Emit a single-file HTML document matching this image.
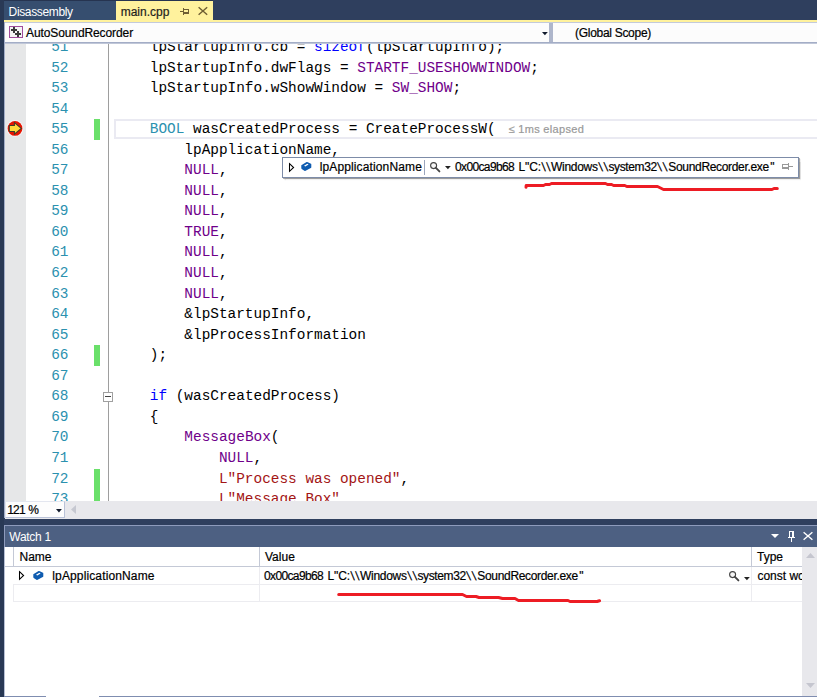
<!DOCTYPE html>
<html><head><meta charset="utf-8"><title>main.cpp</title>
<style>
html,body{margin:0;padding:0;}
body{width:817px;height:697px;overflow:hidden;background:#293955;position:relative;font-family:"Liberation Sans",sans-serif;font-size:12px;color:#1e1e1e;}
.abs{position:absolute;}
svg{position:absolute;overflow:visible;}
.ui{position:absolute;white-space:nowrap;font-family:"Liberation Sans",sans-serif;font-size:12px;line-height:14px;color:#000;-webkit-text-stroke:0.2px currentColor;}
#editor{position:absolute;left:5px;top:44px;width:812px;height:457px;background:#fff;overflow:hidden;}
.ln{position:absolute;left:0;white-space:pre;font-family:"Liberation Mono",monospace;font-size:14.414px;line-height:20px;height:20px;color:#000;}
.num{position:absolute;white-space:pre;font-family:"Liberation Mono",monospace;font-size:14.414px;line-height:20px;height:20px;color:#2b91af;text-align:right;width:40px;}
.k{color:#0000ff}.m{color:#6f008a}.t{color:#2b91af}.s{color:#a31515}
.g{position:absolute;width:6px;background:#6ae06a;}
.tri{position:absolute;width:0;height:0;}
</style></head><body>

<div class="abs" style="left:0;top:0;width:817px;height:20px;background:#2f3f5e"></div>
<div class="abs" style="left:0;top:0;width:213px;height:1px;background:#263450"></div>
<div class="abs" style="left:0;top:0;width:4px;height:697px;background:#293955"></div>
<div class="abs" style="left:4px;top:1px;width:112px;height:19px;background:#364e6f"></div>
<div class="ui" style="left:8.6px;top:5px;color:#fff;letter-spacing:-0.36px;-webkit-text-stroke:0">Disassembly</div>
<div class="abs" style="left:116px;top:1px;width:97px;height:19px;background:#fff29d"></div>
<div class="ui" style="left:120.7px;top:5px;color:#1e1e1e">main.cpp</div>
<svg style="left:180px;top:8px" width="9" height="7" viewBox="0 0 9 7" shape-rendering="crispEdges"><g fill="#6f5f33"><rect x="0" y="3" width="3" height="1"/><rect x="3" y="0" width="1" height="7"/><rect x="4" y="1" width="5" height="1"/><rect x="8" y="1" width="1" height="5"/><rect x="4" y="4" width="5" height="2"/></g></svg>
<svg style="left:198px;top:7px" width="10" height="8" viewBox="0 0 10 8"><path d="M0.6 0.2L9.2 7.8M9.2 0.2L0.6 7.8" fill="none" stroke="#6f5f33" stroke-width="1.4"/></svg>
<div class="abs" style="left:4px;top:20px;width:813px;height:2px;background:#fff29d"></div>
<div class="abs" style="left:4px;top:22px;width:813px;height:22px;background:#fcfcfc"></div>
<div class="abs" style="left:549px;top:22px;width:4px;height:20px;background:#aeb6cb"></div>
<div class="abs" style="left:4px;top:22px;width:813px;height:1px;background:#c3cadb"></div>
<div class="abs" style="left:4px;top:42px;width:813px;height:1px;background:#a3adc6"></div>
<div class="abs" style="left:4px;top:43px;width:813px;height:1px;background:#c0c7d8"></div>
<div class="abs" style="left:4px;top:22px;width:1px;height:496.5px;background:#a3aec8"></div>
<svg style="left:9px;top:26px" width="14" height="12" viewBox="0 0 14 12" shape-rendering="crispEdges"><rect x="0.5" y="0.5" width="13" height="11" fill="#f4f4f4" stroke="#a04c9c"/><g fill="#3a3a3a"><rect x="2" y="3" width="6" height="2"/><rect x="4" y="1" width="2" height="6"/><rect x="6" y="7" width="6" height="2"/><rect x="8" y="5" width="2" height="6"/></g></svg>
<div class="ui" id="asr" style="left:26px;top:26px;letter-spacing:-0.1px">AutoSoundRecorder</div>
<svg style="left:541.7px;top:32px" width="5.8" height="3.3" viewBox="0 0 5.8 3.3"><path d="M0 0H5.8L2.9 3.3Z" fill="#111a2c"/></svg>
<div class="ui" id="gs" style="left:575px;top:26px;letter-spacing:-0.29px">(Global Scope)</div>
<div id="editor">
<div class="abs" style="left:0;top:0;width:20.5px;height:457px;background:#e6e7e8"></div>
<div class="abs" style="left:103px;top:0;width:1px;height:457px;background:#9e9e9e"></div>
<div class="g" style="left:88.6px;top:75.15px;height:20.55px"></div>
<div class="g" style="left:88.6px;top:301.20px;height:20.55px"></div>
<div class="g" style="left:88.6px;top:424.50px;height:20.55px"></div>
<div class="g" style="left:88.6px;top:445.05px;height:20.55px"></div>
<div class="abs" style="left:109px;top:74.70px;width:720px;height:16.3px;border:2px solid #eaeaf2"></div>
<div class="num" style="left:23.50px;top:-7.05px">51</div>
<div class="ln" style="left:110.20px;top:-7.05px">    lpStartupInfo.cb = <span class="k">sizeof</span>(lpStartupInfo);</div>
<div class="num" style="left:23.50px;top:13.50px">52</div>
<div class="ln" style="left:110.20px;top:13.50px">    lpStartupInfo.dwFlags = <span class="m">STARTF_USESHOWWINDOW</span>;</div>
<div class="num" style="left:23.50px;top:34.05px">53</div>
<div class="ln" style="left:110.20px;top:34.05px">    lpStartupInfo.wShowWindow = <span class="m">SW_SHOW</span>;</div>
<div class="num" style="left:23.50px;top:54.60px">54</div>
<div class="num" style="left:23.50px;top:75.15px">55</div>
<div class="ln" style="left:110.20px;top:75.15px">    <span class="t">BOOL</span> wasCreatedProcess = CreateProcessW(</div>
<div class="num" style="left:23.50px;top:95.70px">56</div>
<div class="ln" style="left:110.20px;top:95.70px">        lpApplicationName,</div>
<div class="num" style="left:23.50px;top:116.25px">57</div>
<div class="ln" style="left:110.20px;top:116.25px">        <span class="m">NULL</span>,</div>
<div class="num" style="left:23.50px;top:136.80px">58</div>
<div class="ln" style="left:110.20px;top:136.80px">        <span class="m">NULL</span>,</div>
<div class="num" style="left:23.50px;top:157.35px">59</div>
<div class="ln" style="left:110.20px;top:157.35px">        <span class="m">NULL</span>,</div>
<div class="num" style="left:23.50px;top:177.90px">60</div>
<div class="ln" style="left:110.20px;top:177.90px">        <span class="m">TRUE</span>,</div>
<div class="num" style="left:23.50px;top:198.45px">61</div>
<div class="ln" style="left:110.20px;top:198.45px">        <span class="m">NULL</span>,</div>
<div class="num" style="left:23.50px;top:219.00px">62</div>
<div class="ln" style="left:110.20px;top:219.00px">        <span class="m">NULL</span>,</div>
<div class="num" style="left:23.50px;top:239.55px">63</div>
<div class="ln" style="left:110.20px;top:239.55px">        <span class="m">NULL</span>,</div>
<div class="num" style="left:23.50px;top:260.10px">64</div>
<div class="ln" style="left:110.20px;top:260.10px">        &amp;lpStartupInfo,</div>
<div class="num" style="left:23.50px;top:280.65px">65</div>
<div class="ln" style="left:110.20px;top:280.65px">        &amp;lpProcessInformation</div>
<div class="num" style="left:23.50px;top:301.20px">66</div>
<div class="ln" style="left:110.20px;top:301.20px">    );</div>
<div class="num" style="left:23.50px;top:321.75px">67</div>
<div class="num" style="left:23.50px;top:342.30px">68</div>
<div class="ln" style="left:110.20px;top:342.30px">    <span class="k">if</span> (wasCreatedProcess)</div>
<div class="num" style="left:23.50px;top:362.85px">69</div>
<div class="ln" style="left:110.20px;top:362.85px">    {</div>
<div class="num" style="left:23.50px;top:383.40px">70</div>
<div class="ln" style="left:110.20px;top:383.40px">        <span class="m">MessageBox</span>(</div>
<div class="num" style="left:23.50px;top:403.95px">71</div>
<div class="ln" style="left:110.20px;top:403.95px">            <span class="m">NULL</span>,</div>
<div class="num" style="left:23.50px;top:424.50px">72</div>
<div class="ln" style="left:110.20px;top:424.50px">            <span class="s">L"Process was opened"</span>,</div>
<div class="num" style="left:23.50px;top:445.05px">73</div>
<div class="ln" style="left:110.20px;top:445.05px">            <span class="s">L"Message Box"</span>,</div>
<div class="ui" style="left:503.5px;top:78px;color:#999;font-size:11px;letter-spacing:0.32px">≤ 1ms elapsed</div>
<svg style="left:2.4000000000000004px;top:76.1px" width="16" height="16" viewBox="0 0 16 16"><circle cx="8" cy="8.4" r="8.3" fill="#f6f6f6"/><circle cx="8" cy="8.4" r="7.4" fill="#e81400"/><path d="M2.3 5.4H7.4V2.7L14.3 8.4L7.4 14.1V11.5H2.3Z" fill="#ffd93a" stroke="#3f3c2c" stroke-width="1.05" stroke-linejoin="miter"/></svg>
<div class="abs" style="left:98px;top:348px;width:8px;height:8px;border:1px solid #a0a0a0;background:#fff"></div>
<div class="abs" style="left:100px;top:352px;width:6px;height:1px;background:#444"></div>
</div>
<div class="abs" style="left:282px;top:157px;width:515px;height:19px;background:#fff;border:1px solid #7d8ca8;box-shadow:1px 1px 0 rgba(0,0,0,0.3),1.5px 2px 1px rgba(0,0,0,0.12)"></div>
<svg style="left:289px;top:163px" width="6" height="10" viewBox="0 0 6 10"><path d="M0.5 0.6L4.6 4.5L0.5 8.4Z" fill="#fff" stroke="#000" stroke-width="1.05" stroke-linejoin="miter"/></svg>
<svg style="left:300.5px;top:162px" width="11" height="9" viewBox="0 0 11 9"><path d="M0.3 3.2L5.6 0.1Q6.2 -0.1 6.8 0.2L10 1.8Q10.3 2 10.3 2.5V5.3Q10.3 5.8 9.8 6L4.6 8.8Q4 9 3.4 8.7L0.7 6.9Q0.3 6.6 0.3 6.1Z" fill="#0f5cb0"/><path d="M3 3.7L6.3 1.7L7.6 2.4L4.3 4.4Z" fill="#fff"/></svg>
<div class="ui" id="t1" style="left:319.7px;top:160px;letter-spacing:0.13px">lpApplicationName</div>
<div class="abs" style="left:424px;top:160px;width:1px;height:15px;background:#9aa5bd"></div>
<svg style="left:430px;top:162px" width="11" height="11" viewBox="0 0 11 11"><circle cx="3.6" cy="3.6" r="3" fill="#f6f6f6" stroke="#444" stroke-width="1.1"/><path d="M5.9 5.9L9.4 9.4" stroke="#444" stroke-width="1.9" stroke-linecap="round"/></svg>
<svg style="left:444.7px;top:166px" width="5.8" height="3.3" viewBox="0 0 5.8 3.3"><path d="M0 0H5.8L2.9 3.3Z" fill="#222"/></svg>
<span class="ui" style="left:455.00px;top:160px;letter-spacing:-0.632px;">0x00ca9b68</span><span class="ui" style="left:518.50px;top:160px;letter-spacing:-0.079px;">L"C:</span><span class="ui" style="left:542.31px;top:160px;letter-spacing:1.414px;transform:skewX(7.67deg);transform-origin:0 50%;">\\</span><span class="ui" style="left:551.10px;top:160px;letter-spacing:-0.298px;">Windows</span><span class="ui" style="left:598.86px;top:160px;letter-spacing:1.914px;transform:skewX(10.33deg);transform-origin:0 50%;">\\</span><span class="ui" style="left:608.40px;top:160px;letter-spacing:-0.366px;">system32</span><span class="ui" style="left:658.08px;top:160px;letter-spacing:2.164px;transform:skewX(11.65deg);transform-origin:0 50%;">\\</span><span class="ui" style="left:668.30px;top:160px;letter-spacing:-0.324px;">SoundRecorder.exe</span><span class="ui" style="left:770.30px;top:160px;letter-spacing:0.000px;">"</span>
<svg style="left:782px;top:163px" width="11" height="7" viewBox="0 0 11 7" shape-rendering="crispEdges"><g fill="#999"><rect x="0" y="1" width="6" height="1"/><rect x="0" y="1" width="1" height="5"/><rect x="0" y="4" width="6" height="2"/><rect x="6" y="0" width="1" height="7"/><rect x="7" y="3" width="4" height="1"/></g></svg>
<div class="abs" style="left:4px;top:518px;width:813px;height:7px;background:#2f3f5e"></div>
<div class="abs" style="left:5px;top:501px;width:812px;height:17.5px;background:#e8e8ec"></div>
<div class="abs" style="left:5px;top:501px;width:60px;height:17px;background:#fdfdfd;border:1px solid #e3e6ef;border-right-color:#b9c2d8;border-bottom-color:#b9c2d8;box-sizing:border-box"></div>
<span class="ui" style="left:7.30px;top:503px;letter-spacing:-0.866px;">121</span><span class="ui" style="left:28.20px;top:503px;letter-spacing:0.000px;">%</span>
<svg style="left:56px;top:509px" width="5.9" height="3.4" viewBox="0 0 5.9 3.4"><path d="M0 0H5.9L2.95 3.4Z" fill="#111a2c"/></svg>
<svg style="left:71px;top:505px" width="5" height="9" viewBox="0 0 5 9"><path d="M5 0V9L0 4.5Z" fill="#c6c8d1"/></svg>
<div class="abs" style="left:4px;top:525px;width:813px;height:1px;background:#8e9bbc"></div>
<div class="abs" style="left:4px;top:525px;width:1px;height:22px;background:#8e9bbc"></div>
<div class="abs" style="left:4px;top:547px;width:1px;height:150px;background:#b7c0d5"></div>
<div class="abs" style="left:5px;top:526px;width:812px;height:21px;background:#4d6082"></div>
<div class="ui" style="left:9.3px;top:530px;color:#fff;letter-spacing:-0.29px;-webkit-text-stroke:0">Watch 1</div>
<svg style="left:771px;top:534px" width="8" height="4" viewBox="0 0 8 4"><path d="M0 0H8L4.0 4Z" fill="#fff"/></svg>
<svg style="left:788px;top:531.4px" width="7" height="11" viewBox="0 0 7 11"><g fill="#fff"><rect x="1" y="0" width="5" height="1"/><rect x="1" y="0" width="1" height="6"/><rect x="4" y="0" width="2" height="6"/><rect x="0" y="6" width="7" height="1"/><rect x="3" y="7" width="1" height="4"/></g></svg>
<svg style="left:803px;top:532px" width="10" height="8" viewBox="0 0 10 8"><path d="M0.6 0.2L9.4 7.8M9.4 0.2L0.6 7.8" fill="none" stroke="#fff" stroke-width="1.4"/></svg>
<div class="abs" style="left:5px;top:547px;width:812px;height:150px;background:#fff"></div>
<div class="abs" style="left:5px;top:566px;width:797px;height:1px;background:#c4c9d6"></div>
<div class="abs" style="left:13px;top:547px;width:1px;height:19px;background:#c4c9d6"></div>
<div class="abs" style="left:259px;top:547px;width:1px;height:19px;background:#c4c9d6"></div>
<div class="abs" style="left:751px;top:547px;width:1px;height:19px;background:#c4c9d6"></div>
<div class="abs" style="left:259px;top:567px;width:1px;height:35px;background:#ececf0"></div>
<div class="abs" style="left:751px;top:567px;width:1px;height:35px;background:#ececf0"></div>
<div class="abs" style="left:13px;top:585px;width:1px;height:17px;background:#ececf0"></div>
<div class="abs" style="left:13px;top:584px;width:789px;height:1px;background:#ececf0"></div>
<div class="abs" style="left:13px;top:601px;width:789px;height:1px;background:#ececf0"></div>
<div class="ui" style="left:19.5px;top:550px;">Name</div>
<div class="ui" style="left:265px;top:550px;">Value</div>
<div class="ui" style="left:757px;top:550px;">Type</div>
<svg style="left:19px;top:571px" width="6" height="10" viewBox="0 0 6 10"><path d="M0.5 0.6L4.6 4.5L0.5 8.4Z" fill="#fff" stroke="#000" stroke-width="1.05" stroke-linejoin="miter"/></svg>
<svg style="left:33px;top:571px" width="11" height="9" viewBox="0 0 11 9"><path d="M0.3 3.2L5.6 0.1Q6.2 -0.1 6.8 0.2L10 1.8Q10.3 2 10.3 2.5V5.3Q10.3 5.8 9.8 6L4.6 8.8Q4 9 3.4 8.7L0.7 6.9Q0.3 6.6 0.3 6.1Z" fill="#0f5cb0"/><path d="M3 3.7L6.3 1.7L7.6 2.4L4.3 4.4Z" fill="#fff"/></svg>
<div class="ui" id="w1" style="left:52.3px;top:569px;letter-spacing:0.13px">lpApplicationName</div>
<span class="ui" style="left:264.00px;top:569px;letter-spacing:-0.632px;">0x00ca9b68</span><span class="ui" style="left:327.50px;top:569px;letter-spacing:-0.079px;">L"C:</span><span class="ui" style="left:351.31px;top:569px;letter-spacing:1.414px;transform:skewX(7.67deg);transform-origin:0 50%;">\\</span><span class="ui" style="left:360.10px;top:569px;letter-spacing:-0.298px;">Windows</span><span class="ui" style="left:407.86px;top:569px;letter-spacing:1.914px;transform:skewX(10.33deg);transform-origin:0 50%;">\\</span><span class="ui" style="left:417.40px;top:569px;letter-spacing:-0.366px;">system32</span><span class="ui" style="left:467.08px;top:569px;letter-spacing:2.164px;transform:skewX(11.65deg);transform-origin:0 50%;">\\</span><span class="ui" style="left:477.30px;top:569px;letter-spacing:-0.324px;">SoundRecorder.exe</span><span class="ui" style="left:579.30px;top:569px;letter-spacing:0.000px;">"</span>
<svg style="left:729px;top:571.2px" width="11" height="11" viewBox="0 0 11 11"><circle cx="3.6" cy="3.6" r="3" fill="#f6f6f6" stroke="#444" stroke-width="1.1"/><path d="M5.9 5.9L9.4 9.4" stroke="#444" stroke-width="1.9" stroke-linecap="round"/></svg>
<svg style="left:743.6px;top:576.8px" width="5.8" height="3.3" viewBox="0 0 5.8 3.3"><path d="M0 0H5.8L2.9 3.3Z" fill="#222"/></svg>
<div class="ui" id="w3" style="left:757.4px;top:569px;width:44.6px;overflow:hidden">const wchar_t *</div>
<div class="abs" style="left:802px;top:547px;width:15px;height:149px;background:#e8e8ec"></div>
<svg style="left:806px;top:553px" width="9" height="5" viewBox="0 0 9 5"><path d="M0 5H9L4.5 0Z" fill="#c5c6cf"/></svg>
<svg style="left:806px;top:683px" width="9" height="5" viewBox="0 0 9 5"><path d="M0 0H9L4.5 5Z" fill="#c5c6cf"/></svg>
<div class="abs" style="left:4px;top:696px;width:42px;height:1px;background:#7f8db0"></div>
<div class="abs" style="left:99px;top:696px;width:718px;height:1px;background:#7f8db0"></div>
<svg style="left:0;top:0" width="817" height="697" viewBox="0 0 817 697"><g fill="none" stroke="#ed1c24" stroke-width="3" stroke-linecap="round" stroke-linejoin="round">
<path d="M526 187.2L526.2 185.5H543.5L545.5 184.5H549.5L551.5 183.5H605.5L607.5 184.5H611.6L613.6 185.5H624.8L626.8 186.5H657.5L663.5 189.5H772L774 188.5H777.3"/>
<path d="M338.7 594.5H462.5L466.5 596.5H476L479 597.5H498.5L502.5 598.5H515L518.5 600.5H568L570 601.5H597L599.5 600.7"/>
</g></svg>
</body></html>
